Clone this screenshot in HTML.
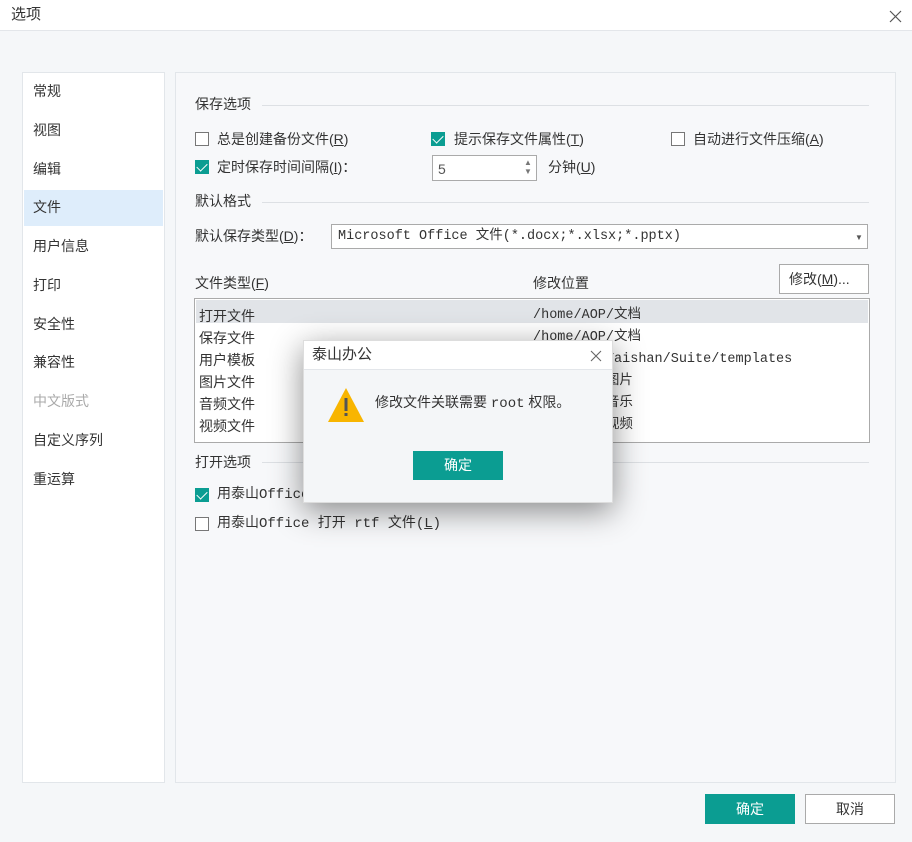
<!DOCTYPE html>
<html><head><meta charset="utf-8"><style>
*{margin:0;padding:0;box-sizing:border-box}
body{width:912px;height:842px;background:#f5f7f9;font-family:"Liberation Sans","Noto Sans CJK SC",sans-serif;font-size:14px;line-height:18px;color:#333;position:relative;overflow:hidden}
.a{position:absolute}
.mono{font-family:"Liberation Mono","Noto Sans CJK SC",monospace}
.cb{position:absolute;width:14px;height:14px;border:1px solid #777;background:#fff}
.cb.on{background:#0b9d92;border-color:#0b9d92}
.cb.on:after{content:"";position:absolute;left:3px;top:0px;width:5px;height:9px;border:solid #fff;border-width:0 1.5px 1.5px 0;transform:rotate(45deg)}
.sec{position:absolute;height:1px;background:#dde0e4}
.side div{position:absolute;left:10px;font-size:14px}
</style></head><body>
<div class="a" style="left:0;top:0;width:912px;height:31px;background:#fff;border-bottom:1px solid #e3e6ea"></div>
<div class="a" style="left:11px;top:6px;font-size:15px">选项</div>
<svg class="a" style="left:889px;top:10px" width="13" height="13"><path d="M1 1L12 12M12 1L1 12" stroke="#555" stroke-width="1.2"/></svg>

<div class="a side" style="left:22px;top:72px;width:143px;height:711px;background:#fff;border:1px solid #e2e6ea">
<div style="left:1px;top:117px;width:139px;height:36px;background:#deedfb"></div>
<div style="top:9px">常规</div><div style="top:48px">视图</div><div style="top:87px">编辑</div><div style="top:125px">文件</div><div style="top:164px">用户信息</div><div style="top:203px">打印</div><div style="top:242px">安全性</div><div style="top:280px">兼容性</div><div style="top:319px;color:#aaa">中文版式</div><div style="top:358px">自定义序列</div><div style="top:397px">重运算</div>
</div>
<div class="a" style="left:175px;top:72px;width:721px;height:711px;background:#f7f8fa;border:1px solid #e2e6ea"></div>

<div class="a" style="left:195px;top:95px">保存选项</div><div class="sec" style="left:262px;top:105px;width:607px"></div>
<div class="cb" style="left:195px;top:132px"></div><div class="a" style="left:217px;top:130px">总是创建备份文件(<u>R</u>)</div>
<div class="cb on" style="left:431px;top:132px"></div><div class="a" style="left:454px;top:130px">提示保存文件属性(<u>T</u>)</div>
<div class="cb" style="left:671px;top:132px"></div><div class="a" style="left:693px;top:130px">自动进行文件压缩(<u>A</u>)</div>
<div class="cb on" style="left:195px;top:160px"></div><div class="a" style="left:217px;top:158px">定时保存时间间隔(<u>I</u>)：</div>
<div class="a" style="left:432px;top:155px;width:105px;height:26px;background:#fff;border:1px solid #aaa;padding:4px 0 0 5px;color:#555">5</div>
<div class="a" style="left:524px;top:158px;font-size:8px;color:#777;line-height:9px">▲<br>▼</div>
<div class="a" style="left:548px;top:158px">分钟(<u>U</u>)</div>
<div class="a" style="left:195px;top:192px">默认格式</div><div class="sec" style="left:262px;top:202px;width:607px"></div>
<div class="a" style="left:195px;top:227px">默认保存类型(<u>D</u>)：</div>
<div class="a mono" style="left:331px;top:224px;width:537px;height:25px;background:#fff;border:1px solid #aaa;padding:3px 0 0 6px;font-size:13.5px">Microsoft Office 文件(*.docx;*.xlsx;*.pptx)</div>
<div class="a" style="left:855px;top:229px;font-size:8px;color:#555">▼</div>

<div class="a" style="left:195px;top:274px">文件类型(<u>F</u>)</div>
<div class="a" style="left:533px;top:274px">修改位置</div>
<div class="a" style="left:779px;top:264px;width:90px;height:30px;background:#fff;border:1px solid #aaa;padding:5px 0 0 9px">修改(<u>M</u>)...</div>
<div class="a" style="left:194px;top:298px;width:676px;height:145px;background:#fff;border:1px solid #aaa">
<div class="a" style="left:1px;top:1px;width:672px;height:23px;background:#e1e4e8"></div>
</div>
<div class="a" style="left:199px;top:305px;line-height:22px">打开文件<br>保存文件<br>用户模板<br>图片文件<br>音频文件<br>视频文件</div>
<div class="a mono" style="left:533px;top:305px;line-height:22px;font-size:13.5px">/home/AOP/文档<br>/home/AOP/文档<br>&nbsp;&nbsp;&nbsp;&nbsp;&nbsp;&nbsp;&nbsp;&nbsp;&nbsp;Taishan/Suite/templates<br>&nbsp;&nbsp;&nbsp;&nbsp;&nbsp;&nbsp;&nbsp;&nbsp;&nbsp;图片<br>&nbsp;&nbsp;&nbsp;&nbsp;&nbsp;&nbsp;&nbsp;&nbsp;&nbsp;音乐<br>&nbsp;&nbsp;&nbsp;&nbsp;&nbsp;&nbsp;&nbsp;&nbsp;&nbsp;视频</div>
<div class="a" style="left:195px;top:453px">打开选项</div><div class="sec" style="left:262px;top:462px;width:607px"></div>
<div class="cb on" style="left:195px;top:488px"></div><div class="a mono" style="left:217px;top:486px">用泰山Office 打开 doc 文件</div>
<div class="cb" style="left:195px;top:517px"></div><div class="a mono" style="left:217px;top:515px">用泰山Office 打开 rtf 文件(<u>L</u>)</div>

<div class="a" style="left:705px;top:794px;width:90px;height:30px;background:#0b9d92;color:#fff;text-align:center;line-height:30px">确定</div>
<div class="a" style="left:805px;top:794px;width:90px;height:30px;background:#fff;border:1px solid #aaa;text-align:center;line-height:28px">取消</div>

<div class="a" style="left:303px;top:340px;width:310px;height:163px;background:#f4f6f8;border:1px solid #ddd;box-shadow:0 8px 30px rgba(0,0,0,.45)">
<div class="a" style="left:0;top:0;width:308px;height:29px;background:#fff;border-bottom:1px solid #e3e6ea"></div>
<div class="a" style="left:8px;top:5px;font-size:15px">泰山办公</div>
<svg class="a" style="left:286px;top:9px" width="12" height="12"><path d="M1 1L11 11M11 1L1 11" stroke="#666" stroke-width="1.1"/></svg>
<svg class="a" style="left:23px;top:46px" width="38" height="36"><path d="M19 1L37 35H1Z" fill="#f8b500"/><rect x="17.5" y="11" width="3" height="13" fill="#555"/><rect x="17.5" y="26" width="3" height="3" fill="#555"/></svg>
<div class="a" style="left:71px;top:52px">修改文件关联需要 <span class="mono">root</span> 权限。</div>
<div class="a" style="left:109px;top:110px;width:90px;height:29px;background:#0b9d92;color:#fff;text-align:center;line-height:29px">确定</div>
</div>
</body></html>
